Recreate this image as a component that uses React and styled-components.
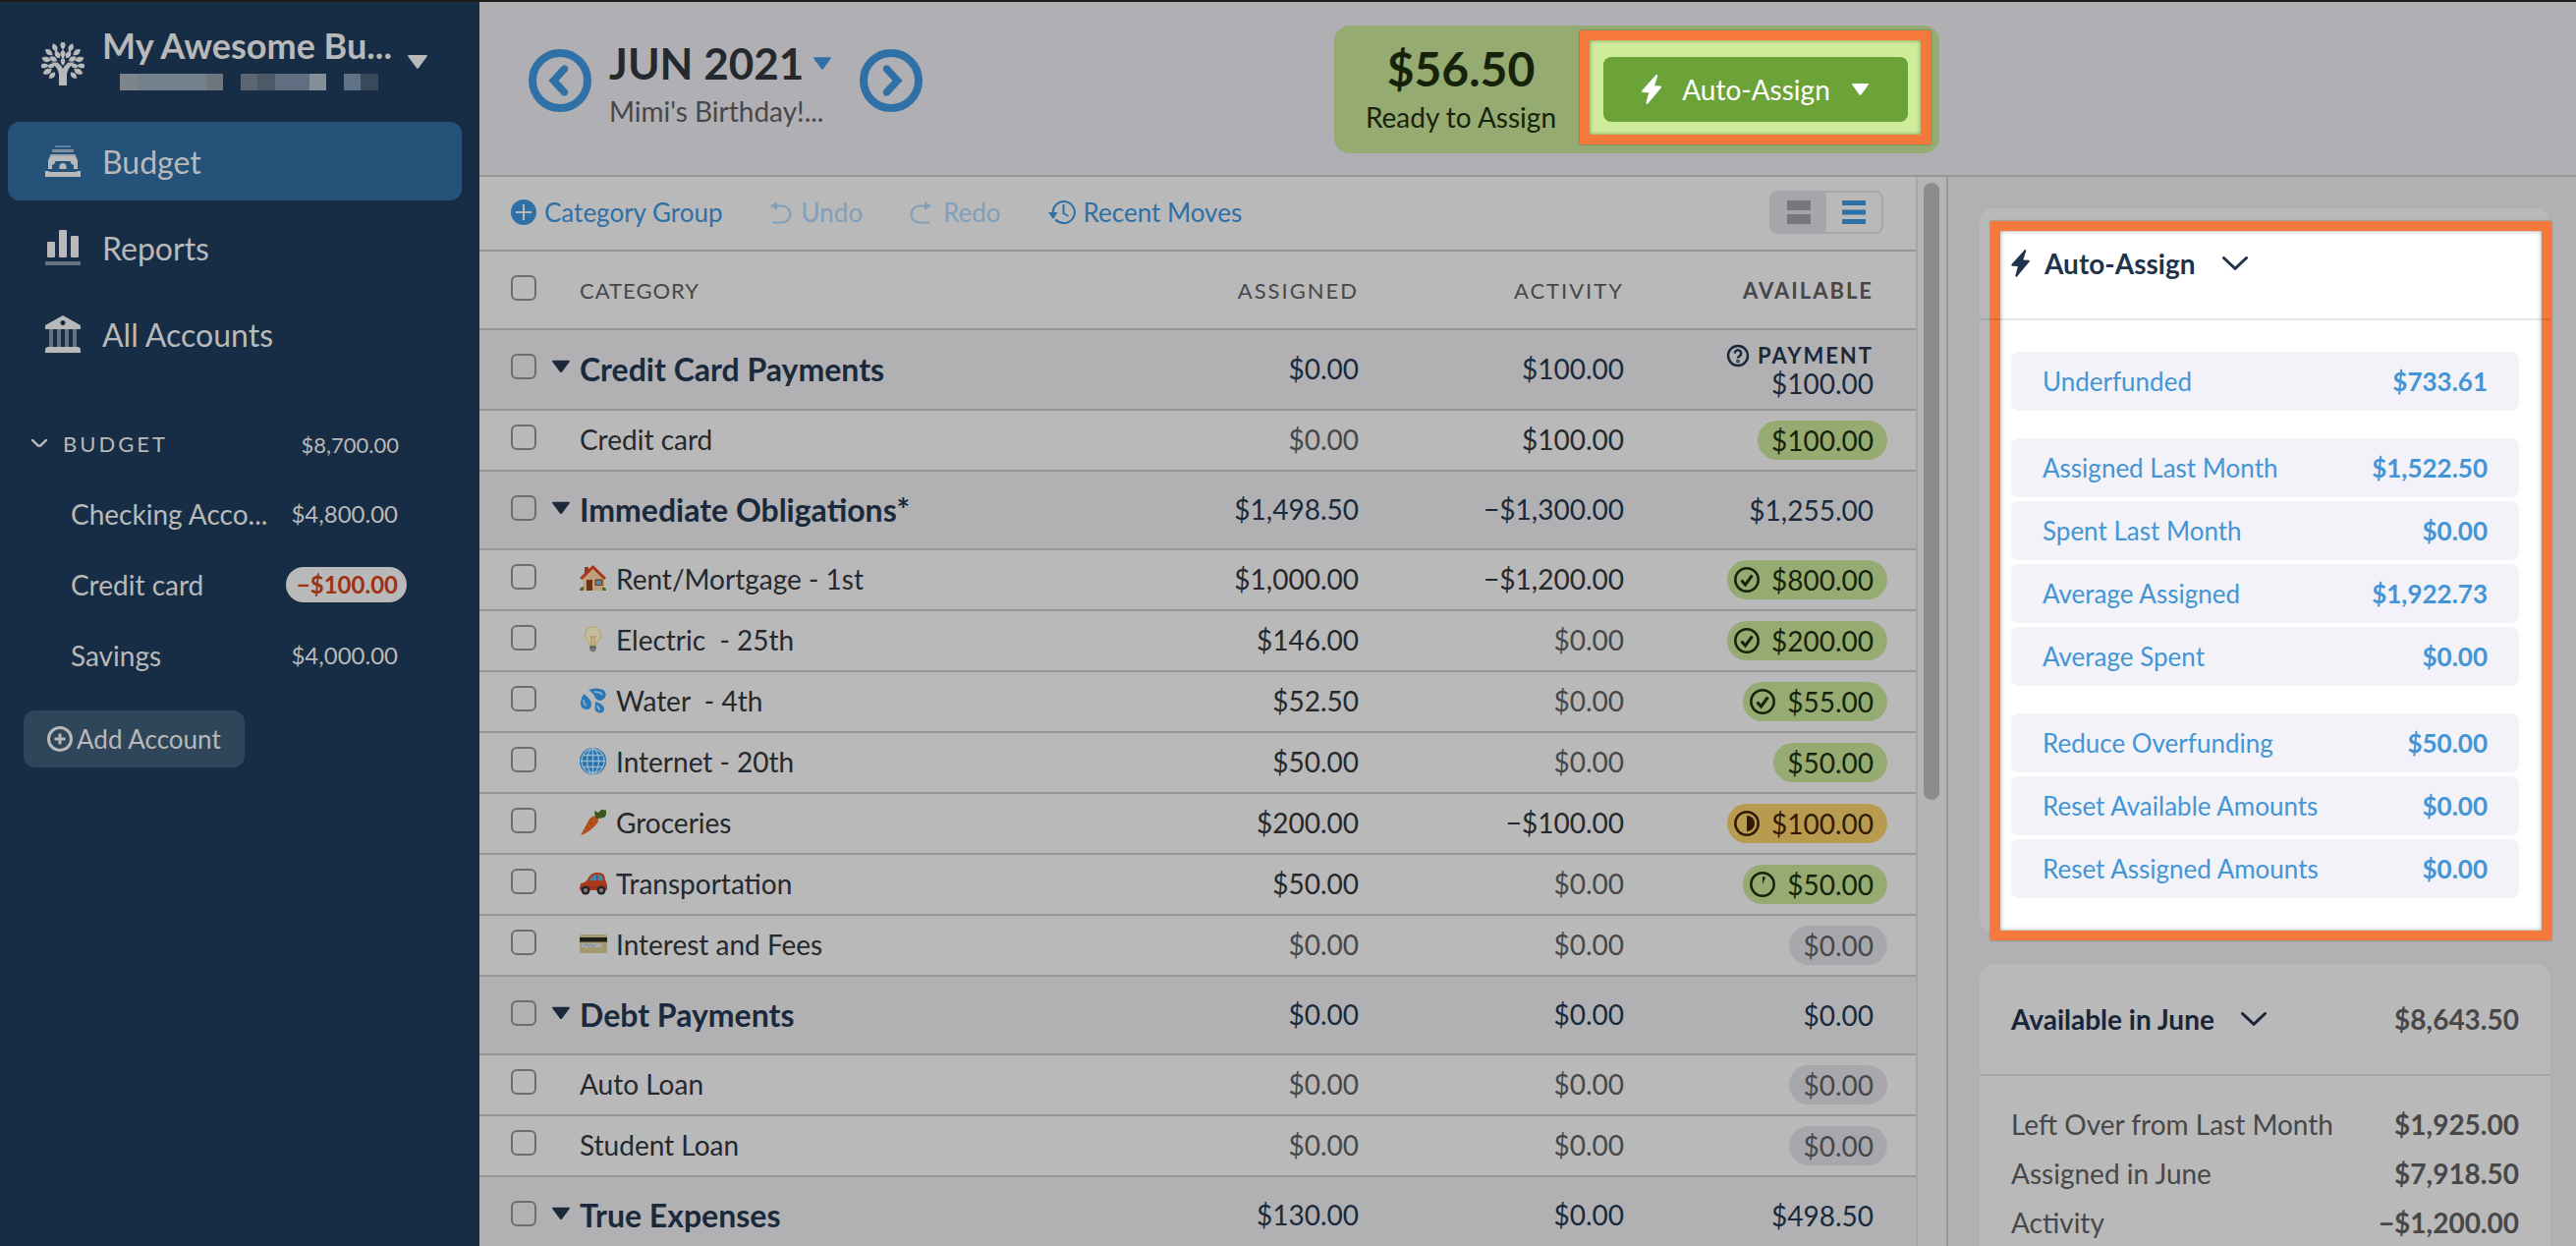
import React from 'react';
import styled, { createGlobalStyle } from 'styled-components';

const GlobalStyle = createGlobalStyle`
  * {
    box-sizing: border-box;
  }

  body {
    margin: 0;
    background: #b1b1b4;
    font-family: Lato, "Liberation Sans", sans-serif;
    font-size: 28px;
    color: #25282c;
  }

  button {
    border: 0;
    padding: 0;
    background: none;
    font: inherit;
    color: inherit;
    cursor: pointer;
  }

  a {
    color: inherit;
    text-decoration: none;
  }

  svg {
    display: block;
    flex: none;
  }
`;

const Page = styled.div`
  display: flex;
  height: 100vh;
  overflow: hidden;
  border-top: 2px solid #1b1b1a;
`;

/* Sidebar */

const Sidebar = styled.aside`
  flex: none;
  width: 488px;
  background: #172d45;
  color: #b9b9b9;
`;

const BudgetSwitcher = styled.button`
  display: flex;
  gap: 18px;
  width: 100%;
  height: 122px;
  padding: 20px 0 0 42px;
  text-align: left;

  > svg:first-child {
    margin-top: 21px;
  }

  > svg:last-child {
    margin-top: 34px;
  }
`;

const BudgetInfo = styled.span`
  width: 293px;
`;

const BudgetName = styled.span`
  display: block;
  font-size: 36px;
  line-height: 48px;
  font-weight: 700;
  white-space: nowrap;
`;

const MaskedEmail = styled.span`
  display: flex;
  gap: 18px;
  padding: 5px 0 0 18px;
`;

const MaskedWord = styled.span`
  display: flex;
`;

const MaskedBlock = styled.span`
  width: ${props => props.$width}px;
  height: 17px;
  background: ${props => props.$color};
`;

const Nav = styled.nav`
  display: flex;
  flex-direction: column;
  gap: 8px;
  padding: 0 18px 0 8px;
`;

const NavItem = styled.a`
  display: flex;
  align-items: center;
  gap: 22px;
  height: 80px;
  padding-left: 38px;
  border-radius: 12px;
  font-size: 32px;
  background: ${props => (props.$active ? '#255279' : 'transparent')};
`;

const Accounts = styled.section`
  padding: 35px 74px 0 0;
`;

const AccountsHeader = styled.button`
  display: flex;
  align-items: center;
  width: 100%;
  height: 72px;
  padding-left: 32px;
  font-size: 22px;
`;

const AccountsTitle = styled.span`
  flex: 1;
  padding-left: 16px;
  letter-spacing: 3px;
  text-align: left;
`;

const AccountsTotal = styled.span`
  padding: 2px 8px 0 0;
`;

const AccountRow = styled.a`
  display: flex;
  align-items: center;
  justify-content: space-between;
  height: 72px;
  padding-left: 72px;
  white-space: nowrap;
`;

const AccountBalance = styled.span`
  padding: 0 9px 0 11px;
  border-radius: 18px;
  font-size: 24px;
  line-height: 36px;
  ${props => props.$negative && `
    background: #b9b9b9;
    color: #9b3313;
    font-weight: 700;
  `}
`;

const AddAccount = styled.button`
  display: flex;
  align-items: center;
  gap: 4px;
  height: 58px;
  margin: 20px 0 0 24px;
  padding: 0 24px;
  border-radius: 12px;
  background: #2f4559;
  font-size: 26px;
`;

/* Header */

const Main = styled.main`
  flex: 1;
  min-width: 0;
  display: flex;
  flex-direction: column;
`;

const Header = styled.header`
  display: flex;
  justify-content: space-between;
  height: 178px;
  padding: 0 648px 0 50px;
  border-bottom: 2px solid #97979a;
  background: #b0afb4;
`;

const MonthNav = styled.div`
  display: flex;
  align-items: flex-start;
  gap: 18px;
  padding-top: 48px;
  color: #2f70a6;
`;

const MonthPicker = styled.div`
  width: 237px;
  margin-top: -11px;
`;

const MonthName = styled.button`
  display: flex;
  align-items: center;
  gap: 10px;
  font-size: 44px;
  line-height: 50px;
  font-weight: 700;
  white-space: nowrap;

  span {
    color: #25282c;
  }
`;

const MonthNote = styled.button`
  display: block;
  line-height: 48px;
  color: #47474a;
`;

const ReadyBox = styled.section`
  display: flex;
  align-items: center;
  gap: 48px;
  height: 130px;
  margin-top: 24px;
  padding: 0 32px;
  border-radius: 16px;
  background: #95ab72;
  color: #16230a;
  text-align: center;
`;

const ReadyAmount = styled.div`
  font-size: 48px;
  line-height: 56px;
  font-weight: 700;
`;

const ReadyLabel = styled.div`
  line-height: 42px;
  white-space: nowrap;
`;

const Spotlight = styled.div`
  position: absolute;
  border: 10px solid #f4793b;
  background: ${props => props.$fill};
  box-shadow: 0 0 2px rgba(0, 0, 0, 0.4), inset 0 0 4px rgba(0, 0, 0, 0.4);
`;

const AutoAssignSlot = styled.div`
  position: relative;

  ${Spotlight} {
    inset: -27px -23px -23px -24px;
  }
`;

const AutoAssignButton = styled.button`
  position: relative;
  display: flex;
  align-items: center;
  width: 310px;
  height: 66px;
  padding: 0 39px;
  justify-content: space-between;
  border-radius: 8px;
  background: #6ca339;
  color: #fff;
`;

/* Budget table */

const Content = styled.div`
  flex: 1;
  min-height: 0;
  display: flex;
`;

const BudgetPane = styled.section`
  flex: 1;
  min-width: 0;
  background: #b9b9b9;
`;

const Toolbar = styled.div`
  display: flex;
  align-items: center;
  gap: 48px;
  height: 76px;
  padding: 0 33px 2px 32px;
  border-bottom: 2px solid #97979a;
`;

const ToolbarButton = styled.button`
  display: flex;
  align-items: center;
  gap: ${props => props.$gap || 8}px;
  font-size: 26px;
  color: #2f70a6;
  white-space: nowrap;

  &:disabled {
    color: #7f9fbb;
  }
`;

const ViewToggle = styled.div`
  display: flex;
  height: 44px;
  margin-left: auto;
  border: 2px solid #a5a5ac;
  border-radius: 8px;
  overflow: hidden;
`;

const ViewOption = styled.button`
  display: flex;
  align-items: center;
  justify-content: center;
  width: 56px;
  background: ${props => (props.$active ? '#b9b9b9' : '#a5a5ac')};
  color: ${props => (props.$active ? '#2f70a6' : '#76787b')};
`;

const Table = styled.table`
  width: 100%;
  table-layout: fixed;
  border-collapse: separate;
  border-spacing: 0;

  th,
  td {
    border-bottom: 2px solid #97979a;
  }
`;

const Row = styled.tr`
  height: ${props => props.$height}px;
  background: ${props => (props.$group ? '#b1b1b4' : 'transparent')};
  color: ${props => (props.$group ? '#1a293b' : 'inherit')};
`;

const HeadCell = styled.th`
  width: ${props => props.$width}px;
  padding: 0 ${props => props.$right || 0}px 0 0;
  font-size: 22px;
  font-weight: ${props => (props.$bold ? 700 : 400)};
  letter-spacing: ${props => (props.$align === 'left' ? 1 : 2)}px;
  text-align: ${props => props.$align || 'right'};
  color: #47474a;
`;

const CheckCell = styled.td`
  width: 102px;
  padding: ${props => props.$top}px 0 0 32px;
  vertical-align: top;
`;

const CheckGroup = styled.div`
  display: flex;
  gap: 16px;

  button {
    height: 26px;
  }
`;

const Checkbox = styled.input.attrs({ type: 'checkbox' })`
  appearance: none;
  display: block;
  width: 26px;
  height: 26px;
  margin: 0;
  border: 2px solid #6d6d70;
  border-radius: 6px;
`;

const NameCell = styled.td`
  padding: 0 0 2px;
  font-size: ${props => (props.$group ? 32 : 28)}px;
  font-weight: ${props => (props.$group ? 700 : 400)};
  white-space: pre;
`;

const Name = styled.div`
  display: flex;
  align-items: center;
  gap: 9px;
`;

const MoneyCell = styled.td`
  padding: 0 0 2px;
  text-align: right;
  color: ${props => (props.$muted ? '#47474a' : 'inherit')};
`;

const AvailableCell = styled.td`
  padding: 0 ${props => (props.$group ? 43 : 29)}px 0 0;
  text-align: right;
  line-height: 28px;
`;

const PaymentLabel = styled.div`
  display: flex;
  justify-content: flex-end;
  align-items: center;
  gap: 8px;
  font-size: 22px;
  font-weight: 700;
  letter-spacing: 2px;
`;

const pillColors = {
  green: ['#95ab72', '#16230a'],
  yellow: ['#b99b50', '#311a05'],
  gray: ['#a7a7ac', '#47474a'],
};

const Pill = styled.button`
  display: inline-flex;
  align-items: center;
  gap: 12px;
  height: 40px;
  padding: 0 14px 0 ${props => (props.$icon ? 7 : 14)}px;
  border-radius: 20px;
  vertical-align: middle;
  background: ${props => pillColors[props.$tone][0]};
  color: ${props => pillColors[props.$tone][1]};
`;

const ScrollTrack = styled.div`
  flex: none;
  width: 31px;
  padding: 6px 0 0 6px;
  border-left: 2px solid #a6a6a9;
  background: #b5b5b6;
`;

const ScrollThumb = styled.div`
  width: 16px;
  height: 628px;
  border-radius: 8px;
  background: #8b8b8b;
`;

/* Inspector */

const Inspector = styled.aside`
  flex: none;
  width: 641px;
  display: flex;
  flex-direction: column;
  gap: 32px;
  padding: 32px 26px 0 32px;
  border-left: 2px solid #97979a;
  background: #b1b1b4;
`;

const Card = styled.section`
  position: relative;
  flex: none;
  border-radius: 14px;
  background: #b9b9b9;

  > ${Spotlight} {
    inset: 13px -1px -8px 11px;
  }
`;

const CardHeader = styled.header`
  position: relative;
  display: flex;
  align-items: center;
  justify-content: space-between;
  height: 114px;
  padding: 0 32px;
  border-bottom: 2px solid rgba(0, 0, 0, 0.1);
  font-weight: 700;
  color: ${props => (props.$lit ? '#1f344b' : '#182638')};
`;

const CardToggle = styled.button`
  display: flex;
  align-items: center;
  gap: 15px;

  svg:last-child {
    margin-left: 12px;
  }
`;

const CardTotal = styled.span`
  color: #47474a;
`;

const AssignBody = styled.div`
  position: relative;
  display: flex;
  flex-direction: column;
  gap: 28px;
  padding: 32px 32px 35px;
`;

const AssignGroup = styled.div`
  display: flex;
  flex-direction: column;
  gap: 4px;
`;

const AssignOption = styled.button`
  display: flex;
  align-items: center;
  justify-content: space-between;
  height: 60px;
  padding: 0 32px;
  border-radius: 8px;
  background: #f2f2f8;
  color: #4495d5;
  font-size: 26px;
`;

const Summary = styled.dl`
  margin: 0;
  padding: 24px 32px;
`;

const SummaryRow = styled.div`
  display: flex;
  justify-content: space-between;
  line-height: 50px;
  color: #47474a;

  dd {
    margin: 0;
    font-weight: 700;
  }
`;

/* Icons */

const Caret = ({ width = 20, height = 14 }) => (
  <svg width={width} height={height} viewBox="0 0 20 14" fill="currentColor">
    <path d="M1 0h18q1.4.3.6 1.6L11 13.3q-1 1-2 0L.4 1.6Q-.4.3 1 0z" />
  </svg>
);

const Chevron = ({ width = 26, stroke = 3 }) => (
  <svg width={width} height={width * 0.54} viewBox="0 0 26 14" fill="none">
    <path d="M1.5 1.5 13 12.3 24.5 1.5" stroke="currentColor" strokeWidth={stroke} strokeLinecap="round" />
  </svg>
);

const Bolt = ({ width = 20, height = 30 }) => (
  <svg width={width} height={height} viewBox="0 0 20 30" fill="currentColor">
    <path d="M14.6.2Q16.8-.3 16 2l-3 9.200 6 .3q1.600.4.6 2L6.500 29.200Q4.200 30.800 4.600 28l2.600-9.800-6-.2Q-.4 17.600.4 16z" />
  </svg>
);

const CircleArrow = ({ flip }) => (
  <svg width="64" height="64" viewBox="0 0 64 64" fill="none" stroke="currentColor">
    <circle cx="32" cy="32" r="28" strokeWidth="8" />
    <path d={flip ? 'M26.500 19 38.500 32 26.500 45' : 'M37.500 19 25.500 32 37.500 45'} strokeWidth="7.500" />
    <path
      d={flip ? 'M27 19.500 38.500 32 27 44.500' : 'M37 19.500 25.500 32 37 44.500'}
      strokeWidth="6"
      strokeLinecap="round"
    />
  </svg>
);

// [angle, radius, size] of each leaf around the crown's centre
const leaves = [
  [0, 19, 3.600], [26, 18.500, 3.600], [-26, 18.500, 3.600], [50, 18.500, 3.800], [-50, 18.500, 3.800],
  [75, 17.500, 3.800], [-75, 17.500, 3.800], [96, 19, 3.500], [-96, 19, 3.500],
  [116, 17.500, 4], [-116, 17.500, 4], [137, 16, 3.400], [-137, 16, 3.400],
  [0, 10, 3.800], [30, 11, 3.600], [-30, 11, 3.600], [63, 11, 3.600], [-63, 11, 3.600],
  [0, 2.500, 3.200], [100, 12, 3], [-100, 12, 3],
];

const TreeLogo = () => (
  <svg width="44" height="44" viewBox="0 0 44 44" fill="currentColor">
    {leaves.map(([angle, radius, size], i) => (
      <path
        key={i}
        transform={`translate(22 22) rotate(${angle}) translate(0 ${-radius})`}
        d={`M0 ${-size} Q${size} 0 0 ${size} Q${-size} 0 0 ${-size}z`}
        stroke="currentColor"
        strokeWidth="1.500"
        strokeLinejoin="round"
      />
    ))}
    <path d="M10 20.500h6.500q4 3 5.500 6.500 1.500-3.500 5.500-6.500H34q-7 5-8 12V44h-8V32.500Q17 25.500 10 20.500z" />
  </svg>
);

const BudgetIcon = () => (
  <svg width="36" height="32" viewBox="0 0 36 32" fill="currentColor">
    <path d="M10 0h16v2H10z" opacity=".45" />
    <path d="M7 4h22v3H7z" opacity=".6" />
    <path d="M5 9h26v2H5z" opacity=".8" />
    <path fillRule="evenodd" d="M5 11h26l2 4v9h-4v-4q-3-1-3.500-4h-15Q10 19 7 20v4H3v-9zM14.500 24v-3q.5-3 3.500-3t3.500 3v3z" />
    <path d="M0 26h3q1 1 2 1h26q1 0 2-1h3v6H0z" />
  </svg>
);

const ReportsIcon = () => (
  <svg width="36" height="36" viewBox="0 0 36 36" fill="currentColor">
    <rect x="2" y="12" width="8" height="16" rx="1" />
    <rect x="14" y="0" width="8" height="28" rx="1" />
    <rect x="26" y="6" width="8" height="22" rx="1" />
    <rect y="32" width="36" height="4" opacity=".5" />
  </svg>
);

const BankIcon = () => (
  <svg width="36" height="38" viewBox="0 0 36 38" fill="currentColor">
    <path fillRule="evenodd" d="M18 0 35 9.500q1 .5 1 2V14H0v-2.500q0-1.500 1-2zM18 5a2.500 2.500 0 1 0 0 5 2.500 2.500 0 0 0 0-5z" />
    <path d="M4 14h4v18H4zM12 14h4v18h-4zM20 14h4v18h-4zM28 14h4v18h-4z" opacity=".5" />
    <path d="M2 32h32l2 2v4H0v-4z" />
  </svg>
);

const PlusCircle = ({ filled }) => (
  <svg width="26" height="26" viewBox="0 0 26 26" fill="none" stroke="currentColor">
    {filled ? (
      <>
        <circle cx="13" cy="13" r="13" fill="currentColor" stroke="none" />
        <path d="M13 5v16M5 13h16" stroke="#b9b9b9" strokeWidth="2" />
      </>
    ) : (
      <>
        <circle cx="13" cy="13" r="11.500" strokeWidth="3" />
        <path d="M13 7.500v11M7.500 13h11" strokeWidth="3" />
      </>
    )}
  </svg>
);

const UndoIcon = ({ flip }) => (
  <svg width="22" height="24" viewBox="0 0 22 24" fill="none" stroke="currentColor" strokeWidth="2">
    <g transform={flip ? 'translate(22 0) scale(-1 1)' : undefined}>
      <path d="M4 5.500h8a8.500 8.500 0 0 1 0 17H2" />
      <path d="M0 5.500 7 1v9z" fill="currentColor" stroke="none" />
    </g>
  </svg>
);

const HistoryIcon = () => (
  <svg width="28" height="24" viewBox="0 0 28 24" fill="none" stroke="currentColor" strokeWidth="2">
    <path d="M5 14A11 11 0 1 1 8 19.800M7 19.500a11 11 0 0 0 3 2" />
    <path d="M0 12h9.500L5 19z" fill="currentColor" stroke="none" />
    <path d="M15.500 4v9l5 3" />
  </svg>
);

const TwoRows = () => (
  <svg width="24" height="24" viewBox="0 0 24 24" fill="currentColor">
    <path d="M0 0h24v10H0zM0 14h24v10H0z" />
  </svg>
);

const ThreeRows = () => (
  <svg width="24" height="24" viewBox="0 0 24 24" fill="currentColor">
    <path d="M0 0h24v5H0zM0 9.500h24v5H0zM0 19h24v5H0z" />
  </svg>
);

const HelpIcon = () => (
  <svg width="24" height="24" viewBox="0 0 24 24" fill="none" stroke="currentColor" strokeWidth="2.500">
    <circle cx="12" cy="12" r="10" />
    <path d="M8.800 9.500a3.200 3.200 0 1 1 4.800 2.800Q12 13.200 12 14.500" />
    <circle cx="12" cy="17.500" r=".6" />
  </svg>
);

const StatusIcon = ({ status }) => (
  <svg width="26" height="26" viewBox="0 0 26 26" fill="none" stroke="currentColor" strokeWidth="2.500">
    <circle cx="13" cy="13" r="11.700" />
    {status === 'check' && <path d="m7.500 13.500 4 4.500 7-9.500" strokeWidth="3" />}
    {status === 'half' && <path d="M13 5a8 8 0 0 1 0 16z" fill="currentColor" stroke="none" />}
    {status === 'start' && <path d="M13 5q1.700 0 3 .8L13 13z" fill="currentColor" stroke="none" />}
  </svg>
);

const emojis = {
  house: (
    <>
      <path d="M5 2h4v7H5z" fill="#8c3b22" />
      <path d="M4 13 14 4l11 9v13H4z" fill="#bd9f7c" />
      <path d="M0 13 13.500 0 27 13l-2 2L13.500 4 2.500 15z" fill="#a8361c" />
      <path d="M7 15h6v11H7z" fill="#6b3217" />
      <path d="M15.500 14.500h8V21h-8z" fill="#6f4527" />
      <path d="M17 16h5v4h-5z" fill="#4f8cb8" />
      <path d="M0 26q0-4 4-4v4zM23 26v-3q4-1 4 3z" fill="#486f24" />
    </>
  ),
  bulb: (
    <>
      <path d="M13.500.8a8 8 0 0 0-8 8q0 3.200 2.500 6 2 2.500 2.300 4.700h6.400q.3-2.200 2.300-4.700 2.500-2.800 2.500-6a8 8 0 0 0-8-8z" fill="#c3bd9d" stroke="#b5a35d" />
      <path d="m10 10 2 2 1.500-2 1.500 2 2-2M12 12v7M15 12v7" fill="none" stroke="#b98250" />
      <path d="M10.300 20h6.400v4.500q-3.200 4-6.400 0z" fill="#77777c" />
      <path d="M10.300 22h6.400" stroke="#4d4d53" />
    </>
  ),
  water: (
    <>
      <path d="M9 3q8-3 15 0 5 4 1 9-5 4-9-.5Q14 6 9 3z" fill="#2c78b5" />
      <path d="M4 7q7 5 8 10 0 6-5 6-6-1-6-6Q1 13 4 7z" fill="#2c78b5" />
      <path d="M16 15q8 2 9 7 0 5-5 4.500-5-1-4.500-5z" fill="#2c78b5" />
      <path d="M15 5q6 0 8 3M4 13q0 5 3 6M18 19q1 4 3 4" fill="none" stroke="#8fb8d4" strokeWidth="1.500" />
    </>
  ),
  globe: (
    <g fill="none" stroke="#95b8cd" strokeWidth="1.300">
      <circle cx="13.500" cy="13.500" r="13" fill="#2b71ac" stroke="#2b71ac" />
      <ellipse cx="13.500" cy="13.500" rx="6" ry="12.500" />
      <path d="M13.500.5v26M.5 13.500h26M3 7.500h21M3 19.500h21" />
      <ellipse cx="13.500" cy="13.500" rx="11.500" ry="12.500" />
    </g>
  ),
  carrot: (
    <>
      <path d="M17 8Q12 6 8 14L1 27q7-2 13-8 6-5 5-9z" fill="#b4511f" />
      <path d="m9 14 3 2M6 19l3 1.500" stroke="#8c3a14" />
      <path d="m16 9-1-7 4 2 3-3 5 .5V6l-2 3-6 1z" fill="#37591f" />
    </>
  ),
  car: (
    <>
      <path d="M1 14q5-1 7-4 3-7 9-7 9-1 9 7l2 5v6H0z" fill="#a83a1c" />
      <path d="M10 11q3-6 7-6v6zM18.500 5q5-.5 5.500 6h-5.500z" fill="#4684ae" />
      <path d="M0 18h28" stroke="#7e2c17" />
      <circle cx="6" cy="21" r="4.500" fill="#262629" />
      <circle cx="22" cy="21" r="4.500" fill="#262629" />
      <circle cx="6" cy="21" r="2" fill="#88888b" />
      <circle cx="22" cy="21" r="2" fill="#88888b" />
    </>
  ),
  card: (
    <>
      <rect y="4" width="28" height="19" rx="1.500" fill="#a49a72" />
      <path d="M0 7h28v4.500H0z" fill="#20201b" />
      <path d="M2.500 13.500h20V17h-20z" fill="#aaaeb5" />
      <path d="m4 16 3-2 2 2 3-1.500 2 1.500 3-1.500" fill="none" stroke="#62718c" strokeWidth=".8" />
    </>
  ),
};

const Emoji = ({ name }) => (
  <svg width="28" height="28" viewBox="0 0 28 28">{emojis[name]}</svg>
);

/* Data */

const accounts = [
  { name: 'Checking Acco...', balance: '$4,800.00' },
  { name: 'Credit card', balance: '−$100.00', negative: true },
  { name: 'Savings', balance: '$4,000.00' },
];

const rows = [
  { group: true, name: 'Credit Card Payments', assigned: '$0.00', activity: '$100.00', available: '$100.00', payment: true },
  { name: 'Credit card', assigned: '$0.00', activity: '$100.00', available: '$100.00', tone: 'green' },
  { group: true, name: 'Immediate Obligations*', assigned: '$1,498.50', activity: '−$1,300.00', available: '$1,255.00' },
  { emoji: 'house', name: 'Rent/Mortgage - 1st', assigned: '$1,000.00', activity: '−$1,200.00', available: '$800.00', tone: 'green', status: 'check' },
  { emoji: 'bulb', name: 'Electric  - 25th', assigned: '$146.00', activity: '$0.00', available: '$200.00', tone: 'green', status: 'check' },
  { emoji: 'water', name: 'Water  - 4th', assigned: '$52.50', activity: '$0.00', available: '$55.00', tone: 'green', status: 'check' },
  { emoji: 'globe', name: 'Internet - 20th', assigned: '$50.00', activity: '$0.00', available: '$50.00', tone: 'green' },
  { emoji: 'carrot', name: 'Groceries', assigned: '$200.00', activity: '−$100.00', available: '$100.00', tone: 'yellow', status: 'half' },
  { emoji: 'car', name: 'Transportation', assigned: '$50.00', activity: '$0.00', available: '$50.00', tone: 'green', status: 'start' },
  { emoji: 'card', name: 'Interest and Fees', assigned: '$0.00', activity: '$0.00', available: '$0.00', tone: 'gray' },
  { group: true, name: 'Debt Payments', assigned: '$0.00', activity: '$0.00', available: '$0.00' },
  { name: 'Auto Loan', assigned: '$0.00', activity: '$0.00', available: '$0.00', tone: 'gray' },
  { name: 'Student Loan', assigned: '$0.00', activity: '$0.00', available: '$0.00', tone: 'gray' },
  { group: true, name: 'True Expenses', assigned: '$130.00', activity: '$0.00', available: '$498.50' },
];

const assignGroups = [
  [['Underfunded', '$733.61']],
  [
    ['Assigned Last Month', '$1,522.50'],
    ['Spent Last Month', '$0.00'],
    ['Average Assigned', '$1,922.73'],
    ['Average Spent', '$0.00'],
  ],
  [
    ['Reduce Overfunding', '$50.00'],
    ['Reset Available Amounts', '$0.00'],
    ['Reset Assigned Amounts', '$0.00'],
  ],
];

const summary = [
  ['Left Over from Last Month', '$1,925.00'],
  ['Assigned in June', '$7,918.50'],
  ['Activity', '−$1,200.00'],
];

const maskedWords = [
  [[18, '#7d848c'], [70, '#73808e'], [17, '#6f767e']],
  [[17, '#5c6672'], [18, '#4d5966'], [35, '#5f6e80'], [17, '#858f98']],
  [[17, '#5f7286'], [18, '#37495b']],
];

const rowHeight = row => {
  if (row.payment) return 82;
  return row.group ? 80 : 62;
};

const BudgetRow = ({ row }) => (
  <Row $group={row.group} $height={rowHeight(row)}>
    <CheckCell $top={row.group ? 24 : 14}>
      <CheckGroup>
        <Checkbox aria-label={row.name} />
        {row.group && (
          <button aria-label="Collapse">
            <Caret width={18} height={14} />
          </button>
        )}
      </CheckGroup>
    </CheckCell>
    <NameCell $group={row.group}>
      <Name>
        {row.emoji && <Emoji name={row.emoji} />}
        {row.name}
      </Name>
    </NameCell>
    <MoneyCell $muted={!row.group && row.assigned === '$0.00'}>{row.assigned}</MoneyCell>
    <MoneyCell $muted={!row.group && row.activity === '$0.00'}>{row.activity}</MoneyCell>
    <AvailableCell $group={row.group}>
      {row.payment && (
        <PaymentLabel>
          <HelpIcon />
          PAYMENT
        </PaymentLabel>
      )}
      {row.group ? row.available : (
        <Pill $tone={row.tone} $icon={row.status}>
          {row.status && <StatusIcon status={row.status} />}
          {row.available}
        </Pill>
      )}
    </AvailableCell>
  </Row>
);

const App = () => (
  <>
    <GlobalStyle />
    <Page>
      <Sidebar>
        <BudgetSwitcher>
          <TreeLogo />
          <BudgetInfo>
            <BudgetName>My Awesome Bu...</BudgetName>
            <MaskedEmail>
              {maskedWords.map((word, i) => (
                <MaskedWord key={i}>
                  {word.map(([width, color]) => (
                    <MaskedBlock key={color} $width={width} $color={color} />
                  ))}
                </MaskedWord>
              ))}
            </MaskedEmail>
          </BudgetInfo>
          <Caret />
        </BudgetSwitcher>
        <Nav>
          <NavItem href="#budget" $active><BudgetIcon />Budget</NavItem>
          <NavItem href="#reports"><ReportsIcon />Reports</NavItem>
          <NavItem href="#accounts"><BankIcon />All Accounts</NavItem>
        </Nav>
        <Accounts>
          <AccountsHeader>
            <Chevron width={16} stroke={4} />
            <AccountsTitle>BUDGET</AccountsTitle>
            <AccountsTotal>$8,700.00</AccountsTotal>
          </AccountsHeader>
          {accounts.map(account => (
            <AccountRow key={account.name} href="#account">
              {account.name}
              <AccountBalance $negative={account.negative}>{account.balance}</AccountBalance>
            </AccountRow>
          ))}
        </Accounts>
        <AddAccount><PlusCircle />Add Account</AddAccount>
      </Sidebar>

      <Main>
        <Header>
          <MonthNav>
            <button aria-label="Previous month"><CircleArrow /></button>
            <MonthPicker>
              <MonthName><span>JUN 2021</span><Caret width={18} height={13} /></MonthName>
              <MonthNote>Mimi's Birthday!...</MonthNote>
            </MonthPicker>
            <button aria-label="Next month"><CircleArrow flip /></button>
          </MonthNav>
          <ReadyBox>
            <div>
              <ReadyAmount>$56.50</ReadyAmount>
              <ReadyLabel>Ready to Assign</ReadyLabel>
            </div>
            <AutoAssignSlot>
              <Spotlight $fill="#cfec9b" />
              <AutoAssignButton>
                <Bolt />
                Auto-Assign
                <Caret width={19} height={12} />
              </AutoAssignButton>
            </AutoAssignSlot>
          </ReadyBox>
        </Header>

        <Content>
          <BudgetPane>
            <Toolbar>
              <ToolbarButton><PlusCircle filled />Category Group</ToolbarButton>
              <ToolbarButton disabled $gap={10}><UndoIcon />Undo</ToolbarButton>
              <ToolbarButton disabled $gap={12}><UndoIcon flip />Redo</ToolbarButton>
              <ToolbarButton><HistoryIcon />Recent Moves</ToolbarButton>
              <ViewToggle>
                <ViewOption aria-label="Comfortable rows"><TwoRows /></ViewOption>
                <ViewOption aria-label="Compact rows" $active><ThreeRows /></ViewOption>
              </ViewToggle>
            </Toolbar>
            <Table>
              <thead>
                <Row $height={80}>
                  <CheckCell as="th" $top={24}><Checkbox aria-label="Select all" /></CheckCell>
                  <HeadCell $align="left">CATEGORY</HeadCell>
                  <HeadCell $width={270}>ASSIGNED</HeadCell>
                  <HeadCell $width={270}>ACTIVITY</HeadCell>
                  <HeadCell $width={297} $right={43} $bold>AVAILABLE</HeadCell>
                </Row>
              </thead>
              <tbody>
                {rows.map((row, i) => <BudgetRow key={i} row={row} />)}
              </tbody>
            </Table>
          </BudgetPane>
          <ScrollTrack><ScrollThumb /></ScrollTrack>

          <Inspector>
            <Card>
              <Spotlight $fill="#fff" />
              <CardHeader $lit>
                <CardToggle><Bolt width={19} height={28} />Auto-Assign<Chevron /></CardToggle>
              </CardHeader>
              <AssignBody>
                {assignGroups.map((group, i) => (
                  <AssignGroup key={i}>
                    {group.map(([label, amount]) => (
                      <AssignOption key={label}>
                        {label}
                        <strong>{amount}</strong>
                      </AssignOption>
                    ))}
                  </AssignGroup>
                ))}
              </AssignBody>
            </Card>
            <Card>
              <CardHeader>
                <CardToggle>Available in June<Chevron /></CardToggle>
                <CardTotal>$8,643.50</CardTotal>
              </CardHeader>
              <Summary>
                {summary.map(([label, amount]) => (
                  <SummaryRow key={label}>
                    <dt>{label}</dt>
                    <dd>{amount}</dd>
                  </SummaryRow>
                ))}
              </Summary>
            </Card>
          </Inspector>
        </Content>
      </Main>
    </Page>
  </>
);

export default App;
